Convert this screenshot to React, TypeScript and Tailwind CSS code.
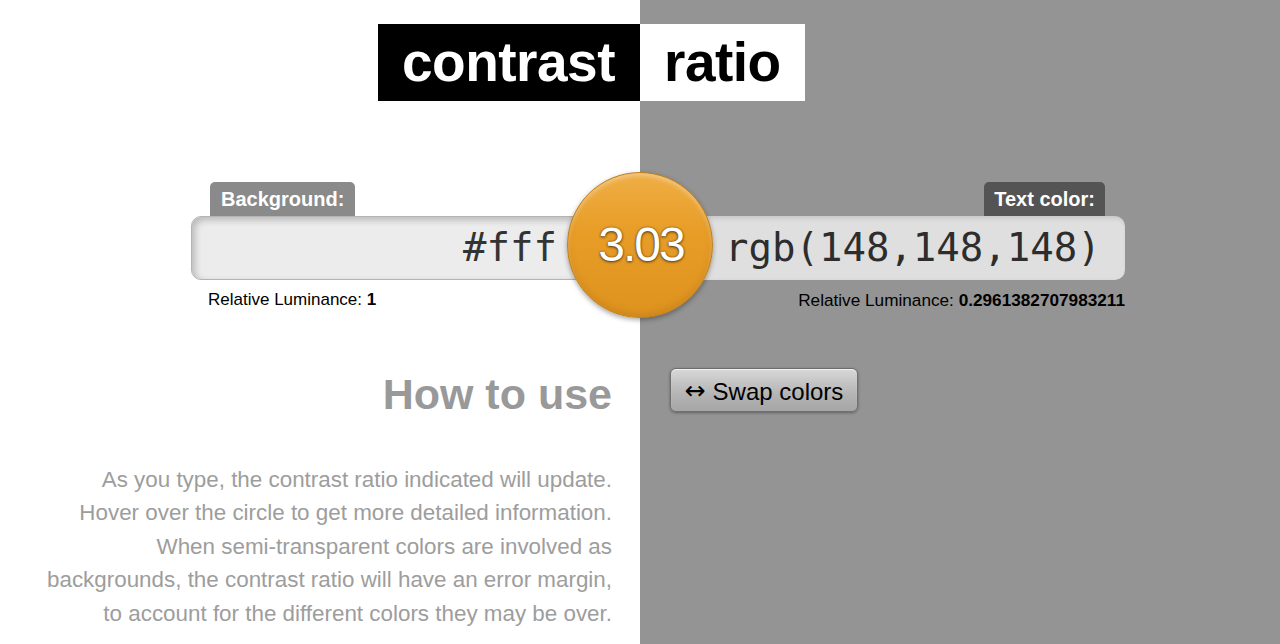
import React from 'react';

const mono = "font-['DejaVu_Sans_Mono',monospace]";

const App: React.FC = () => {
  return (
    <div className="min-h-screen w-full bg-[linear-gradient(to_right,#ffffff_50%,#949494_50%)] font-['Liberation_Sans',Arial,sans-serif] pt-6">
      {/* Logo: half on white, half on gray */}
      <h1 className="grid grid-cols-2 text-[55px] font-bold leading-[77px] tracking-[-0.5px]">
        <span className="justify-self-end bg-black text-white pl-6 pr-[25px]">contrast</span>
        <span className="justify-self-start bg-white text-black px-6">ratio</span>
      </h1>

      <main className="mt-[81px]">
        {/* Color fields */}
        <div className="relative grid grid-cols-2">
          <div className="flex flex-col justify-self-end w-[449px]">
            <label className="self-start ml-[19px] h-[34px] leading-[35px] px-[11px] rounded-t-[5px] bg-[#8a8a8a] text-white text-[20px] font-bold">
              Background:
            </label>
            <div className={`h-[64px] rounded-[10px] border border-[#b4b4b4] bg-[#ececec] shadow-[inset_3px_3px_7px_rgba(0,0,0,0.22)] flex items-center justify-end pr-[82px] text-[39px] text-[#333] ${mono}`}>
              #fff
            </div>
            <p className="mt-[10px] pl-[17px] text-[17px] leading-5 text-black">
              Relative Luminance: <b>1</b>
            </p>
          </div>

          <div className="flex flex-col justify-self-start w-[485px]">
            <label className="self-end mr-[20px] h-[34px] leading-[35px] px-[10px] rounded-t-[5px] bg-[#545454] text-white text-[20px] font-bold">
              Text color:
            </label>
            <div className={`h-[64px] rounded-[10px] bg-[#dfdfdf] shadow-[inset_2px_2px_5px_rgba(0,0,0,0.12)] flex items-center pl-[85px] text-[39px] text-[#2d2d2d] ${mono}`}>
              rgb(148,148,148)
            </div>
            <p className="mt-[10px] text-right text-[17.2px] leading-5 text-black">
              Relative Luminance: <b>0.2961382707983211</b>
            </p>
          </div>

          {/* Ratio badge sits over the seam */}
          <div className="absolute left-1/2 top-[-10px] -translate-x-1/2 w-[146px] h-[146px] rounded-full border border-[#c0801c] bg-[linear-gradient(to_bottom,#efae45,#e89d27_40%,#de931f)] shadow-[inset_0_3px_4px_rgba(255,255,255,0.35),inset_0_-3px_6px_rgba(150,90,10,0.25),0_2px_5px_rgba(0,0,0,0.35)] flex items-center justify-center">
            <span className="ml-[2px] text-white text-[48px] tracking-[-2px] leading-none [text-shadow:0_1px_3px_rgba(0,0,0,0.6),0_0_2px_rgba(0,0,0,0.45)]">
              3.03
            </span>
          </div>
        </div>

        <div className="grid grid-cols-2 mt-[58px]">
          <section className="pr-[28px] text-right">
            <h2 className="text-[43px] leading-[52px] font-bold text-[#999]">How to use</h2>
            <p className="mt-[43px] text-[22.4px] leading-[33.4px] text-[#9d9d9d]">
              As you type, the contrast ratio indicated will update.
              <br />
              Hover over the circle to get more detailed information.
              <br />
              When semi-transparent colors are involved as
              <br />
              backgrounds, the contrast ratio will have an error margin,
              <br />
              to account for the different colors they may be over.
            </p>
          </section>
          <section className="pl-[30px]">
            <button className="h-[44px] w-[188px] rounded-[6px] border border-[#6e6e6e] bg-[linear-gradient(to_bottom,#d8d8d8,#b4b4b4_60%,#a6a6a6)] shadow-[inset_0_1px_1px_rgba(255,255,255,0.7),0_1px_3px_rgba(0,0,0,0.35)] text-[24px] leading-none pt-[3px] text-black flex items-center justify-center gap-[7px]">
              <span className="font-['DejaVu_Sans',sans-serif] text-[25px] -mt-[3px]">↔</span>
              <span>Swap colors</span>
            </button>
          </section>
        </div>
      </main>
    </div>
  );
};

export default App;
